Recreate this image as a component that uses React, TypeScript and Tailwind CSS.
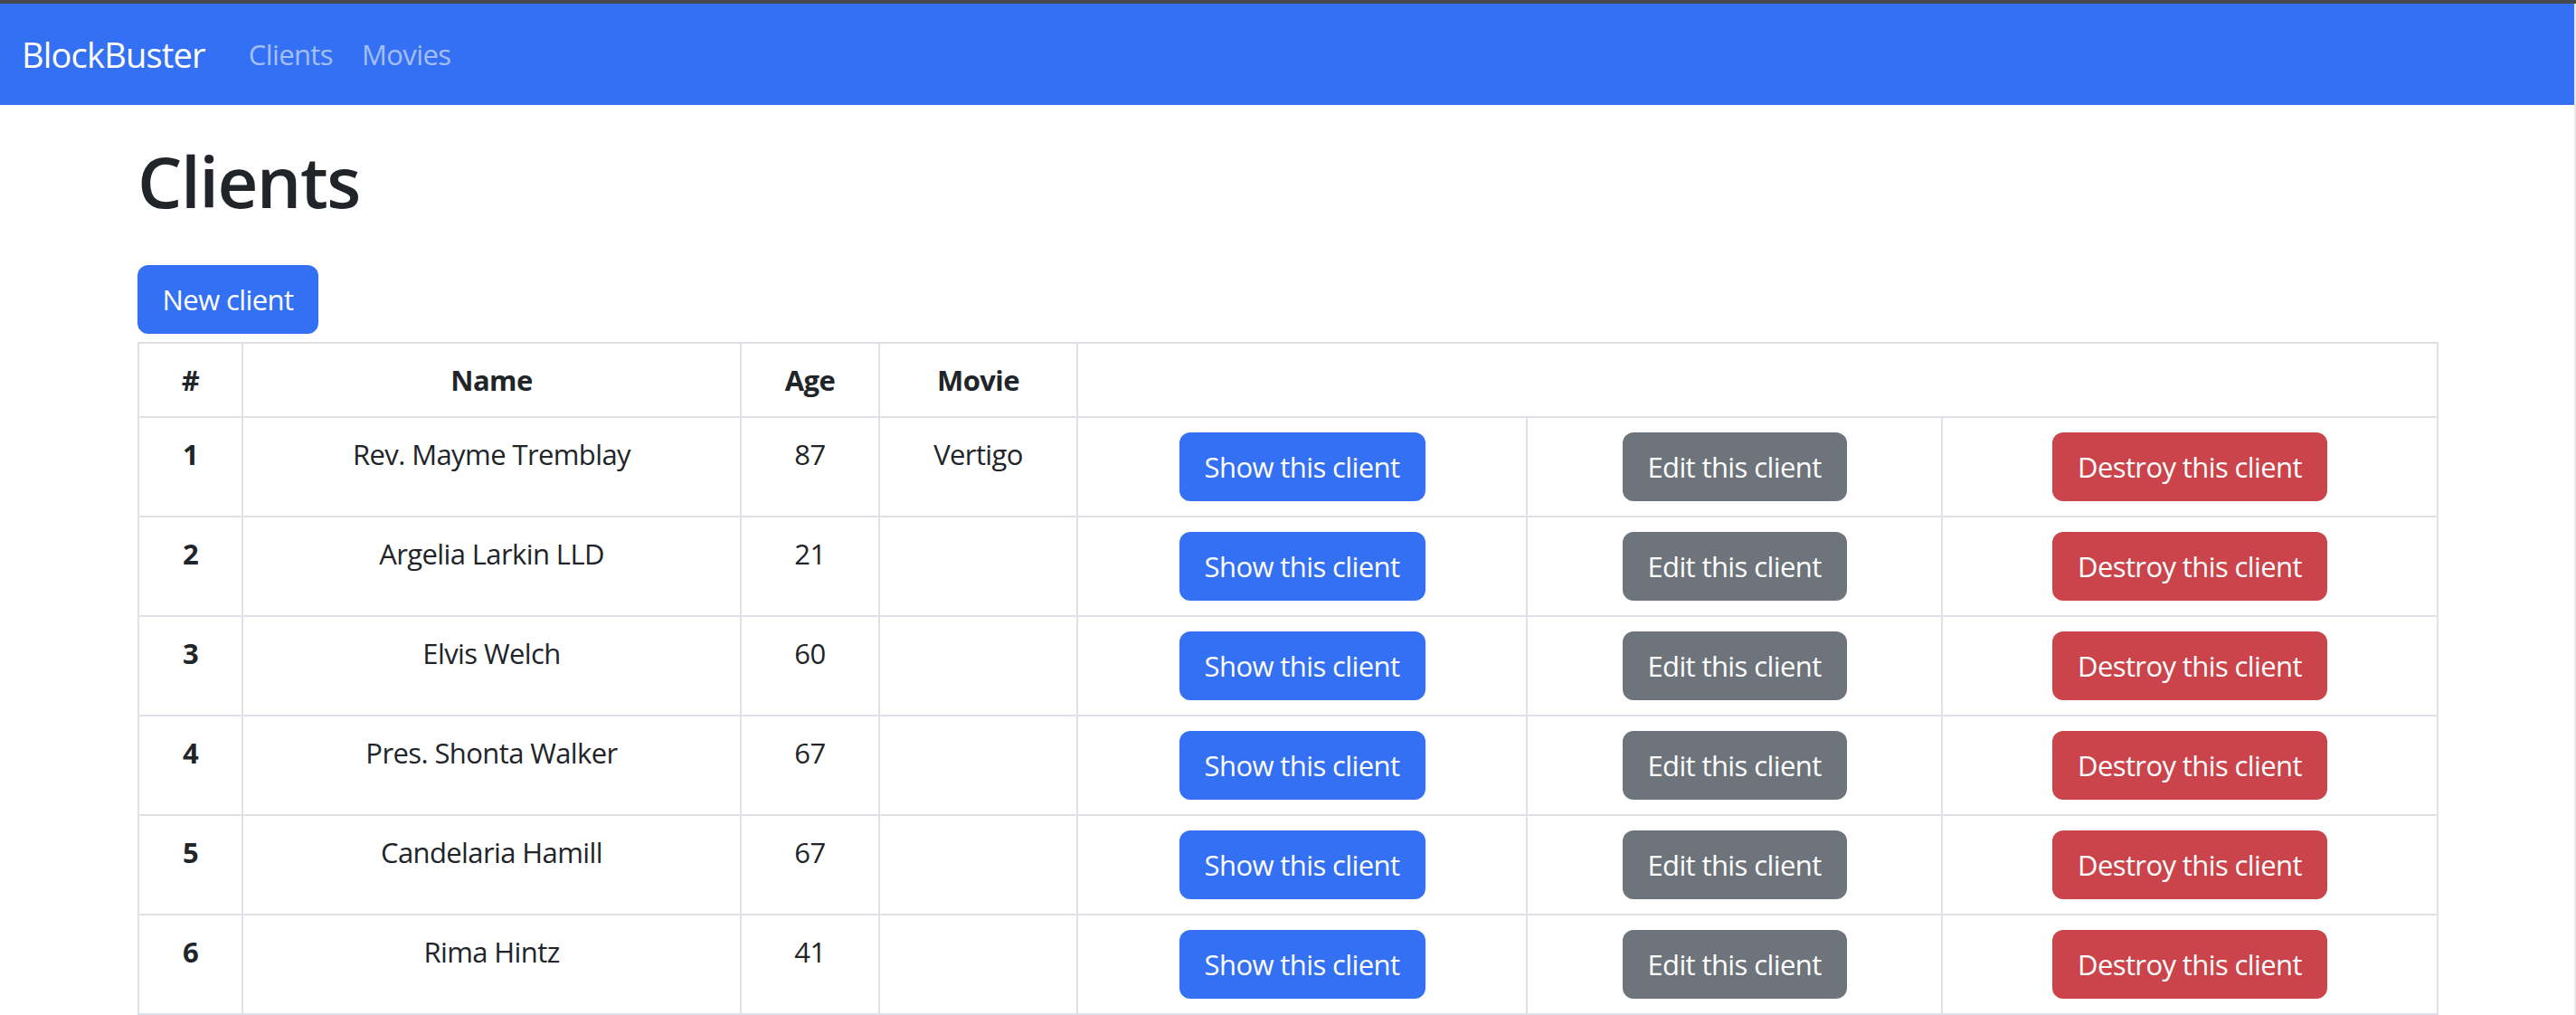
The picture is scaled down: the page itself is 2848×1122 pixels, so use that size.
import React from 'react';

interface Client {
  id: number;
  name: string;
  age: number;
  movie: string;
}

const clients: Client[] = [
  { id: 1, name: 'Rev. Mayme Tremblay', age: 87, movie: 'Vertigo' },
  { id: 2, name: 'Argelia Larkin LLD', age: 21, movie: '' },
  { id: 3, name: 'Elvis Welch', age: 60, movie: '' },
  { id: 4, name: 'Pres. Shonta Walker', age: 67, movie: '' },
  { id: 5, name: 'Candelaria Hamill', age: 67, movie: '' },
  { id: 6, name: 'Rima Hintz', age: 41, movie: '' }
];

const cell = 'border-2 border-[#dee2e6] p-4 align-top text-center';
const btn = 'mx-auto flex h-[76px] items-center justify-center rounded-xl text-white';

const Navbar: React.FC = () => (
  <nav className="flex h-[112px] items-center bg-[#3470f3] px-[24px]">
    <a href="#" className="mr-[32px] text-[38px] leading-[60px] tracking-[-0.8px] text-white">BlockBuster</a>
    <a href="#" className="px-[16px] text-[31px] leading-[48px] tracking-[-0.6px] text-[#a4bef9]">Clients</a>
    <a href="#" className="px-[16px] text-[31px] leading-[48px] tracking-[-0.6px] text-[#a4bef9]">Movies</a>
  </nav>
);

export default function App() {
  return (
    <div className="flex h-[1122px] flex-col overflow-hidden bg-white font-['Open_Sans',sans-serif] text-[#212529]">
      <div className="h-[4px] bg-[#45484c]" />
      <div className="flex min-h-0 flex-1">
        <div className="min-w-0 flex-1">
          <Navbar />
          <main className="px-[152px] pt-[36px]">
            <h1 className="text-[78px] font-semibold leading-[96px] tracking-[-1.5px]">Clients</h1>

            <button className="mt-[45px] mb-[9px] flex h-[76px] w-[200px] items-center justify-center rounded-xl bg-[#3470f3] text-[31px] tracking-[-0.6px] text-white">
              New client
            </button>

            <table className="w-full table-fixed border-collapse text-[31px] leading-[48px] tracking-[-0.6px]">
              <colgroup>
                <col className="w-[115px]" />
                <col className="w-[551px]" />
                <col className="w-[153px]" />
                <col className="w-[219px]" />
                <col className="w-[497px]" />
                <col className="w-[459px]" />
                <col className="w-[548px]" />
              </colgroup>
              <thead>
                <tr>
                  <th className={`${cell} font-bold`}>#</th>
                  <th className={`${cell} font-bold`}>Name</th>
                  <th className={`${cell} font-bold`}>Age</th>
                  <th className={`${cell} font-bold`}>Movie</th>
                  <th className={cell} colSpan={3}></th>
                </tr>
              </thead>
              <tbody>
                {clients.map(c => (
                  <tr key={c.id}>
                    <th scope="row" className={`${cell} font-bold`}>{c.id}</th>
                    <td className={cell}>{c.name}</td>
                    <td className={cell}>{c.age}</td>
                    <td className={cell}>{c.movie}</td>
                    <td className={cell}>
                      <a href="#" className={`${btn} w-[272px] bg-[#3470f3]`}>Show this client</a>
                    </td>
                    <td className={cell}>
                      <a href="#" className={`${btn} w-[248px] bg-[#6e747b]`}>Edit this client</a>
                    </td>
                    <td className={cell}>
                      <a href="#" className={`${btn} w-[304px] bg-[#cb444b]`}>Destroy this client</a>
                    </td>
                  </tr>
                ))}
              </tbody>
            </table>
          </main>
        </div>
        <div className="w-[2px] bg-[#e8e8e8]" />
      </div>
    </div>
  );
}
